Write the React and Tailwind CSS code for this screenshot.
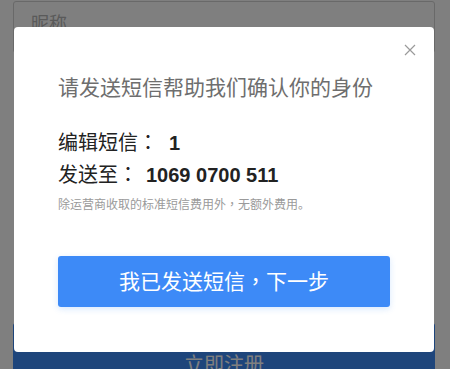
import React from "react";

const font = "font-['Liberation_Sans','Noto_Sans_CJK_SC',sans-serif]";
// centred full-width punctuation
const punct = "font-['Noto_Sans_CJK_TC',sans-serif]";

// close icon for the dialog
function CloseIcon() {
  return (
    <svg width="12" height="12" viewBox="0 0 12 12" fill="none">
      <path d="M1 1L11 11M11 1L1 11" stroke="#9a9a9a" strokeWidth="1.2" />
    </svg>
  );
}

function SmsDialog() {
  return (
    <div className="absolute left-[14px] top-[27px] w-[420px] h-[325px] bg-white rounded-[4px] px-[44px] flex flex-col">
      <button className="absolute right-[18px] top-[17px] w-[12px] h-[12px] flex items-center justify-center">
        <CloseIcon />
      </button>
      <h2 className="mt-[47px] h-[28px] text-[21px] leading-[28px] text-[#6e6e6e] whitespace-nowrap">
        请发送短信帮助我们确认你的身份
      </h2>
      <div className="mt-[24px] h-[32px] text-[20px] leading-[32px] text-[#222] whitespace-nowrap">
        编辑短信<span className={punct}>：</span>
        <span className="ml-[11px] font-bold">1</span>
      </div>
      <div className="h-[32px] text-[20px] leading-[32px] text-[#222] whitespace-nowrap">
        发送至<span className={punct}>：</span>
        <span className="ml-[8px] font-bold">1069 0700 511</span>
      </div>
      <p className="mt-[4px] h-[20px] text-[12px] leading-[20px] text-[#9a9a9a] whitespace-nowrap">
        除运营商收取的标准短信费用外<span className={punct}>，</span>无额外费用。
      </p>
      <button className="mt-[42px] h-[51px] w-full rounded-[3px] bg-[#3d8af7] text-white text-[21px] shadow-[0_2px_6px_rgba(61,138,247,0.2)]">
        我已发送短信<span className={punct}>，</span>下一步
      </button>
    </div>
  );
}

export default function App() {
  return (
    <div className={`relative w-[450px] h-[369px] overflow-hidden bg-white ${font}`}>
      {/* page behind the mask */}
      <div className="h-full pl-[13px] pr-[15px] pt-[1px] flex flex-col">
        <div className="h-[52px] border border-[#d2d2d2] rounded-[3px] pl-[17px] pt-[10px] text-[18px] leading-[24px] text-[#b4b4b4]">
          昵称
        </div>
        <div className="mt-[183px] mr-[1px] h-[44px] flex justify-end">
          <div className="w-[120px] bg-[#3d8af7] rounded-[3px]" />
        </div>
        <div className="mt-auto -mb-[12px] h-[58px] w-full bg-[#3d8af7] text-white text-[20px] leading-[24px] pt-[30px] text-center rounded-[3px]">
          立即注册
        </div>
      </div>
      <div className="absolute inset-0 bg-black/50" />
      <SmsDialog />
    </div>
  );
}
